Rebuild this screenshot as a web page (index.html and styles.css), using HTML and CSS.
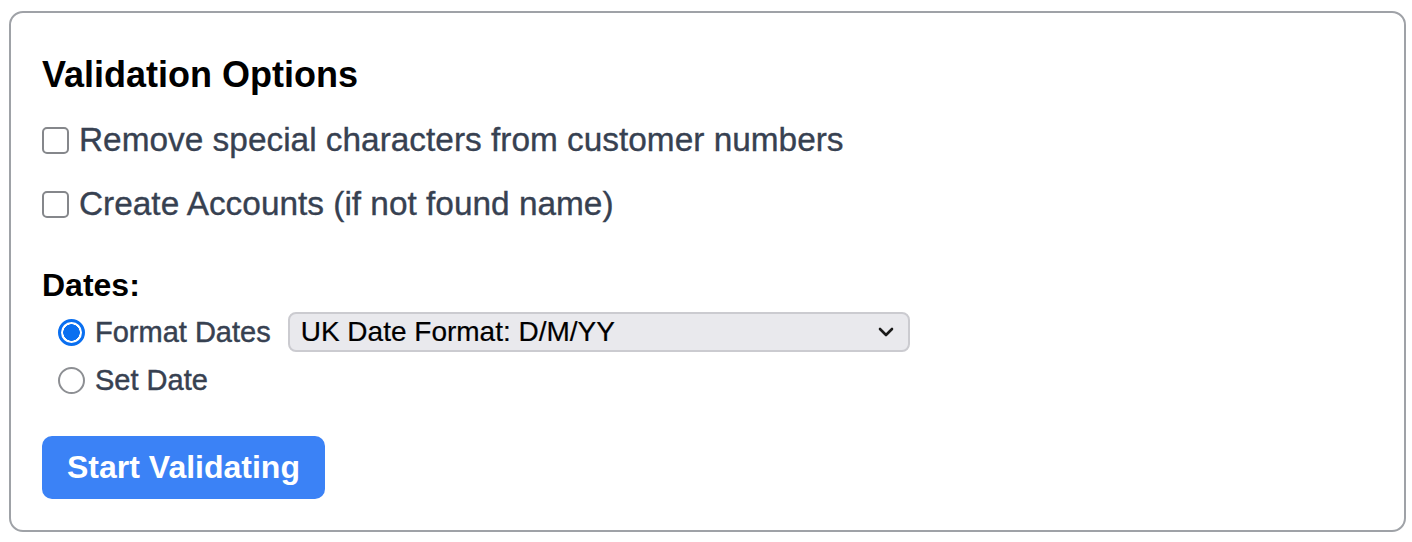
FILE: index.html
```html
<!DOCTYPE html>
<html lang="en">
<head>
<meta charset="utf-8">
<title>Validation Options</title>
<link rel="stylesheet" href="styles.css">
</head>
<body>
<div class="card">
  <h2 class="title">Validation Options</h2>
  <label class="check-row"><span class="checkbox"></span><span>Remove special characters from customer numbers</span></label>
  <label class="check-row second"><span class="checkbox"></span><span>Create Accounts (if not found name)</span></label>
  <div class="dates-label">Dates:</div>
  <div class="radio-row format">
    <span class="radio checked"></span>
    <span class="radio-text">Format Dates</span>
    <div class="select">
      <span>UK Date Format: D/M/YY</span>
      <svg class="chev" width="16" height="10" viewBox="0 0 16 10"><path d="M2 2 L8 8 L14 2" fill="none" stroke="#1a1a1a" stroke-width="2.6" stroke-linecap="round" stroke-linejoin="round"/></svg>
    </div>
  </div>
  <div class="radio-row setdate">
    <span class="radio"></span>
    <span class="radio-text">Set Date</span>
  </div>
  <div class="actions"><button class="btn">Start Validating</button></div>
</div>
</body>
</html>
```
FILE: styles.css
```css
html, body {
  margin: 0;
  padding: 0;
  background: #ffffff;
}
body {
  font-family: "Liberation Sans", Arial, sans-serif;
}
.card {
  margin: 11px 6px 0 9px;
  height: 521px;
  box-sizing: border-box;
  border: 2px solid #9fa2a7;
  border-radius: 14px;
  padding: 42px 31px 0 31px;
  display: flex;
  flex-direction: column;
  align-items: flex-start;
}
.title {
  margin: 0;
  font-size: 36px;
  line-height: 40px;
  font-weight: 700;
  color: #000000;
}
.check-row {
  display: flex;
  align-items: center;
  gap: 10px;
  height: 44px;
  margin-top: 23px;
  font-size: 33.4px;
  color: #374151;
  -webkit-text-stroke: 0.35px #374151;
}
.check-row.second {
  margin-top: 20px;
}
.checkbox {
  width: 27px;
  height: 27px;
  box-sizing: border-box;
  border: 2px solid #85878b;
  border-radius: 5px;
  background: #ffffff;
  flex: none;
}
.dates-label {
  margin-top: 40px;
  font-size: 32px;
  line-height: 38px;
  font-weight: 700;
  color: #000000;
}
.radio-row {
  display: flex;
  align-items: center;
  margin-left: 16px;
  font-size: 29px;
  color: #374151;
  -webkit-text-stroke: 0.45px #374151;
}
.radio-row.format {
  height: 40px;
  margin-top: 8px;
}
.radio-row.setdate {
  height: 36px;
  margin-top: 10px;
}
.radio {
  width: 27px;
  height: 27px;
  box-sizing: border-box;
  border: 2px solid #8d8f93;
  border-radius: 50%;
  background: #ffffff;
  flex: none;
  margin-right: 10px;
}
.radio.checked {
  border: 3px solid #0a6ff0;
  background: radial-gradient(circle, #0a6ff0 0 8px, #ffffff 8.5px);
}
.radio-text {
  margin-right: 17px;
}
.select {
  width: 622px;
  height: 40px;
  box-sizing: border-box;
  border: 2px solid #cbcbd0;
  border-radius: 8px;
  background: #e9e9ed;
  display: flex;
  align-items: center;
  justify-content: space-between;
  padding: 0 14px 0 11px;
  font-size: 28px;
  color: #000000;
  -webkit-text-stroke: 0.2px #000000;
}
.chev {
  display: block;
}
.actions {
  margin-top: 38px;
}
.btn {
  font-family: "Liberation Sans", Arial, sans-serif;
  font-size: 32px;
  font-weight: 700;
  color: #ffffff;
  background: #3b82f6;
  border: none;
  border-radius: 10px;
  height: 63px;
  padding: 0 25px;
  cursor: pointer;
}
```
